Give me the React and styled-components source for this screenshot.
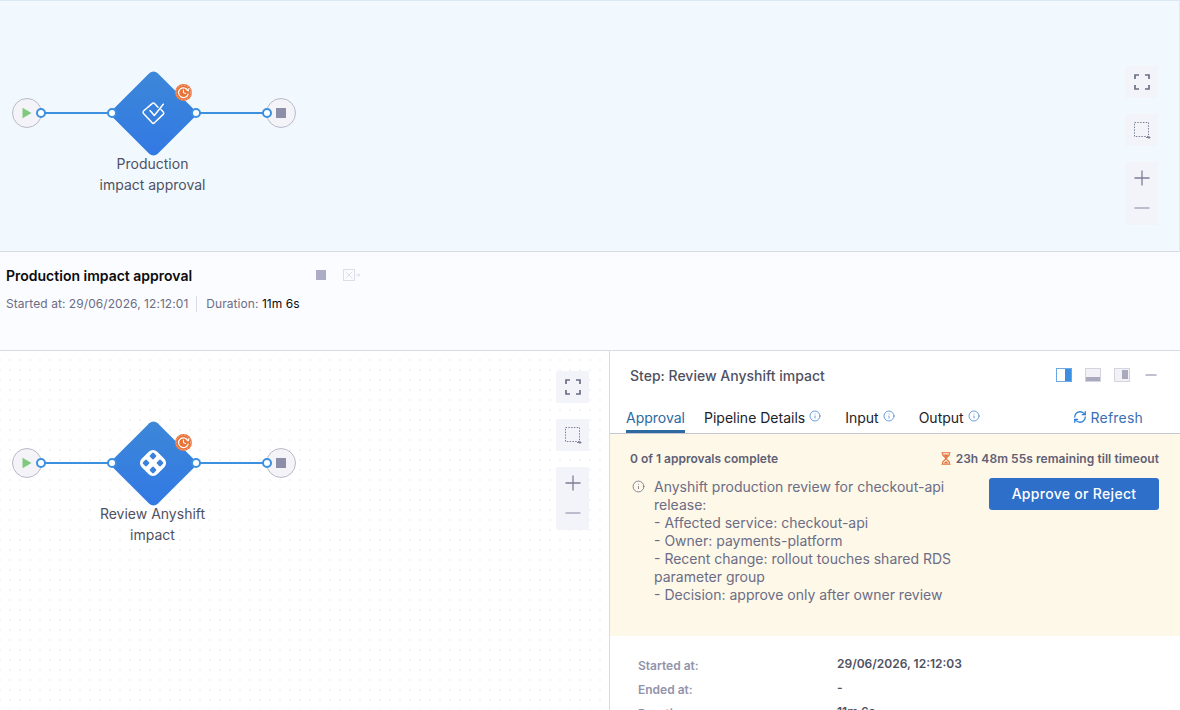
import React from 'react';
import styled, { createGlobalStyle } from 'styled-components';
import { Info, RefreshCw } from 'lucide-react';

const GlobalStyle = createGlobalStyle`
  html, body {
    margin: 0;
    padding: 0;
    height: 710px;
    overflow: hidden;
    background: #fff;
    font-family: Inter, "Liberation Sans", sans-serif;
    -webkit-font-smoothing: antialiased;
  }
`;

const Start = () => (
  <StartCircle>
    <svg width="10" height="12" viewBox="0 0 10 12"><path d="M0.5 0.8 L9.5 6 L0.5 11.2 Z" fill="#7fc97f" /></svg>
  </StartCircle>
);

const Stop = () => (
  <StopCircle>
    <StopSquare />
  </StopCircle>
);

const ApprovalGlyph = () => (
  <svg width="26" height="26" viewBox="0 0 26 26" fill="none" stroke="#fff" strokeWidth="1.5" strokeLinejoin="round" strokeLinecap="round">
    <path d="M18 7.2 L14.5 3.6 Q13.3 2.4 12.1 3.6 L3.5 11 Q2.5 12.2 3.5 13.4 L12.2 22.8 Q13.3 24 14.4 22.8 L23.2 14.4 Q24.4 13.2 23.3 12 L21 9.6" />
    <path d="M10 10.5 L14.3 15.5 L23.3 4.2" />
  </svg>
);

const AnyshiftGlyph = () => (
  <svg width="32" height="32" viewBox="0 0 32 32">
    <rect x="5" y="5" width="22" height="22" rx="6" fill="#fff" transform="rotate(45 16 16)" />
    <g fill="#3a82dc">
      <rect x="13.3" y="6.3" width="5.4" height="5.4" rx="1.2" transform="rotate(45 16 9)" />
      <rect x="13.3" y="20.3" width="5.4" height="5.4" rx="1.2" transform="rotate(45 16 23)" />
      <rect x="6.3" y="13.3" width="5.4" height="5.4" rx="1.2" transform="rotate(45 9 16)" />
      <rect x="20.3" y="13.3" width="5.4" height="5.4" rx="1.2" transform="rotate(45 23 16)" />
    </g>
  </svg>
);

const WaitingBadge = () => (
  <Badge>
    <svg width="17" height="17" viewBox="0 0 16 16" fill="none" stroke="#fff" strokeLinecap="round">
      <circle cx="8" cy="8" r="8" fill="#e9743a" stroke="none" />
      <path d="M12.2 6.4 A4.6 4.6 0 1 0 12.4 9.4" strokeWidth="1.1" />
      <path d="M8 5.6 V8.2 L10 9" strokeWidth="1" />
      <path d="M10.4 5.2 L12.6 6.6 L13 4.2" strokeWidth="0.9" />
      <circle cx="8" cy="8" r="6.9" strokeWidth="0.6" strokeDasharray="1 2" opacity="0.6" />
    </svg>
  </Badge>
);

const PipelineGraph = ({ glyph, label }) => (
  <Graph>
    <Edge $from={41} $to={112} />
    <Edge $from={196} $to={267} />
    <Start />
    <Stop />
    <Diamond />
    <GlyphSlot>{glyph}</GlyphSlot>
    <WaitingBadge />
    <Port $x={41} />
    <Port $x={112} />
    <Port $x={196} />
    <Port $x={267} />
    <NodeLabel>{label}</NodeLabel>
  </Graph>
);

const CanvasControls = () => (
  <Controls>
    <ControlBox>
      <svg width="16" height="16" viewBox="0 0 16 16" fill="none" stroke="#6b6d85" strokeWidth="1.7">
        <path d="M1 5 V1 H5 M11 1 H15 V5 M15 11 V15 H11 M5 15 H1 V11" />
      </svg>
    </ControlBox>
    <ControlBox>
      <svg width="18" height="18" viewBox="0 0 18 18" fill="none" stroke="#7d7f96" strokeWidth="1" strokeDasharray="1.5 1.3">
        <rect x="1.5" y="1.5" width="14" height="14" />
        <path d="M13 16.5 H17 M15.5 15 L17 16.5 L15.5 18" strokeDasharray="none" />
      </svg>
    </ControlBox>
    <ZoomBox>
      <svg width="16" height="16" viewBox="0 0 16 16" stroke="#7d7f96" strokeWidth="1.3"><path d="M0.5 8 H15.5 M8 0.5 V15.5" /></svg>
      <svg width="16" height="16" viewBox="0 0 16 16" stroke="#9d9fb3" strokeWidth="1.3"><path d="M0.5 8 H15.5" /></svg>
    </ZoomBox>
  </Controls>
);

const LayoutRight = () => (
  <svg width="16" height="14" viewBox="0 0 16 14">
    <rect x="0.5" y="0.5" width="15" height="13" fill="#fff" stroke="#6aa9e6" />
    <rect x="9" y="1" width="6" height="12" fill="#3c8fe0" />
  </svg>
);

const LayoutBottom = () => (
  <svg width="16" height="14" viewBox="0 0 16 14">
    <rect x="0.5" y="0.5" width="15" height="13" fill="#f1f1f6" stroke="#d3d4df" />
    <rect x="1" y="9" width="14" height="4" fill="#a9aabd" />
  </svg>
);

const LayoutFloat = () => (
  <svg width="16" height="14" viewBox="0 0 16 14">
    <rect x="0.5" y="0.5" width="15" height="13" fill="#f1f1f6" stroke="#d3d4df" />
    <rect x="8" y="2" width="6" height="9" fill="#a9aabd" />
  </svg>
);

const Hourglass = () => (
  <svg width="10" height="13" viewBox="0 0 10 13" fill="none" stroke="#e2703a" strokeWidth="1.1">
    <path d="M0.5 0.7 H9.5 M0.5 12.3 H9.5" />
    <path d="M1.7 1 V3 L5 6.5 L8.3 3 V1" />
    <path d="M1.7 12 V10 L5 6.5 L8.3 10 V12" />
    <path d="M2.4 2.4 H7.6 L5 5.6 Z M2.4 11.6 L5 9 L7.6 11.6 Z" fill="#e2703a" stroke="none" />
  </svg>
);

const App = () => {
  return (
    <Page>
      <GlobalStyle />
      <StageCanvas>
        <PipelineGraph glyph={<ApprovalGlyph />} label={<>Production<br />impact approval</>} />
        <CanvasControls />
      </StageCanvas>

      <StageHeader>
        <TitleRow>
          <StageTitle>Production impact approval</StageTitle>
          <HeaderStop />
          <svg width="18" height="12" viewBox="0 0 18 12" fill="none" stroke="#dcdde8" strokeWidth="1">
            <rect x="0.5" y="0.5" width="11" height="11" />
            <path d="M2.5 2.5 L9.5 9.5 M9.5 2.5 L2.5 9.5 M13 6 H17 M15.5 4.5 L17 6 L15.5 7.5" />
          </svg>
        </TitleRow>
        <MetaRow>
          <span>Started at: 29/06/2026, 12:12:01</span>
          <MetaDivider />
          <span>Duration: <MetaStrong>11m 6s</MetaStrong></span>
        </MetaRow>
      </StageHeader>

      <Lower>
        <StepCanvas>
          <PipelineGraph glyph={<AnyshiftGlyph />} label={<>Review Anyshift<br />impact</>} />
          <CanvasControls />
        </StepCanvas>

        <Details>
          <DetailsHead>
            <StepTitle>Step: Review Anyshift impact</StepTitle>
            <LayoutIcons>
              <LayoutRight />
              <LayoutBottom />
              <LayoutFloat />
              <MinimizeIcon width="12" height="14" viewBox="0 0 12 14" stroke="#9d9fb3" strokeWidth="1.3"><path d="M0.5 7 H11.5" /></MinimizeIcon>
            </LayoutIcons>
          </DetailsHead>

          <Tabs>
            <Tab $active>Approval</Tab>
            <Tab>Pipeline Details <Info size={12} color="#3b7fd1" strokeWidth={1.5} /></Tab>
            <Tab>Input <Info size={12} color="#3b7fd1" strokeWidth={1.5} /></Tab>
            <Tab>Output <Info size={12} color="#3b7fd1" strokeWidth={1.5} /></Tab>
            <RefreshLink><RefreshCw size={14} strokeWidth={2.2} />Refresh</RefreshLink>
          </Tabs>

          <ApprovalBox>
            <ApprovalTop>
              <span>0 of 1 approvals complete</span>
              <Timer><Hourglass />23h 48m 55s remaining till timeout</Timer>
            </ApprovalTop>
            <ApprovalBody>
              <InfoSlot><Info size={13} color="#6b6d85" strokeWidth={1.5} /></InfoSlot>
              <Message>
                Anyshift production review for checkout-api release:{'\n'}
                - Affected service: checkout-api{'\n'}
                - Owner: payments-platform{'\n'}
                - Recent change: rollout touches shared RDS parameter group{'\n'}
                - Decision: approve only after owner review
              </Message>
              <ApproveButton>Approve or Reject</ApproveButton>
            </ApprovalBody>
          </ApprovalBox>

          <InfoGrid>
            <InfoLabel>Started at:</InfoLabel>
            <InfoValue>29/06/2026, 12:12:03</InfoValue>
            <InfoLabel>Ended at:</InfoLabel>
            <InfoValue>-</InfoValue>
            <InfoLabel>Duration:</InfoLabel>
            <InfoValue>11m 6s</InfoValue>
          </InfoGrid>
        </Details>
      </Lower>
    </Page>
  );
};

export default App;

// Styled Components
const Page = styled.div`
  width: 1180px;
  height: 710px;
  overflow: hidden;
  display: flex;
  flex-direction: column;
`;

const StageCanvas = styled.div`
  height: 250px;
  flex: none;
  display: flex;
  justify-content: space-between;
  align-items: flex-start;
  padding-right: 21px;
  background: #f1f9ff;
  border-top: 1px solid #d9e8f2;
  border-right: 1px solid #dfeaf2;
  border-bottom: 1px solid #d9dae5;
`;

const StageHeader = styled.div`
  height: 99px;
  flex: none;
  box-sizing: border-box;
  padding: 15px 6px 0;
  background: #fbfcff;
  border-bottom: 1px solid #d9dae5;
`;

const TitleRow = styled.div`
  display: flex;
  align-items: center;
  height: 16px;
  svg { margin-left: 17px; }
`;

const StageTitle = styled.div`
  width: 310px;
  font-size: 14px;
  font-weight: 600;
  color: #0b0b0d;
`;

const HeaderStop = styled.div`
  width: 10px;
  height: 10px;
  background: #acadc4;
`;

const MetaRow = styled.div`
  display: flex;
  align-items: center;
  margin-top: 13px;
  font-size: 12px;
  line-height: 16px;
  letter-spacing: 0.06px;
  color: #6b6d85;
`;

const MetaDivider = styled.div`
  width: 1px;
  height: 16px;
  margin: 0 9px 0 8px;
  background: #d9dae5;
`;

const MetaStrong = styled.span`
  color: #0b0b0d;
`;

const Lower = styled.div`
  flex: 1;
  min-height: 0;
  display: flex;
`;

const StepCanvas = styled.div`
  width: 609px;
  flex: none;
  display: flex;
  justify-content: space-between;
  align-items: flex-start;
  padding-right: 20px;
  box-sizing: border-box;
  background-color: #fff;
  background-image: radial-gradient(#f4f4f8 1px, transparent 1.2px);
  background-size: 10px 10px;
  background-position: 5px 4px;
`;

const Graph = styled.div`
  position: relative;
  width: 310px;
  height: 130px;
  flex: none;
  margin-top: 70px;
`;

const Edge = styled.div`
  position: absolute;
  left: ${(p) => p.$from}px;
  width: ${(p) => p.$to - p.$from}px;
  top: 41px;
  height: 2px;
  background: #3d8fe0;
`;

const Circle = styled.div`
  position: absolute;
  top: 27px;
  width: 30px;
  height: 30px;
  box-sizing: border-box;
  display: flex;
  align-items: center;
  justify-content: center;
  border-radius: 50%;
  border: 1px solid #b9bac9;
  background: #f3f3f8;
`;

const StartCircle = styled(Circle)`
  left: 12px;
`;

const StopCircle = styled(Circle)`
  left: 266px;
`;

const StopSquare = styled.div`
  width: 10px;
  height: 10px;
  background: #8d8ea8;
`;

const Diamond = styled.div`
  position: absolute;
  left: 121.5px;
  top: 10.5px;
  width: 63px;
  height: 63px;
  border-radius: 6px;
  transform: rotate(45deg);
  background: linear-gradient(135deg, #3c88d8 0%, #3278e4 100%);
`;

const GlyphSlot = styled.div`
  position: absolute;
  left: 123px;
  top: 12px;
  width: 60px;
  height: 60px;
  display: flex;
  align-items: center;
  justify-content: center;
`;

const Badge = styled.div`
  position: absolute;
  left: 175px;
  top: 13px;
  width: 17px;
  height: 17px;
  line-height: 0;
`;

const Port = styled.div`
  position: absolute;
  left: ${(p) => p.$x - 5}px;
  top: 37px;
  width: 10px;
  height: 10px;
  box-sizing: border-box;
  border-radius: 50%;
  border: 2px solid #3d8fe0;
  background: #fff;
`;

const NodeLabel = styled.div`
  position: absolute;
  left: 72.5px;
  top: 82px;
  width: 160px;
  text-align: center;
  font-size: 14px;
  line-height: 21px;
  color: #4f5162;
`;

const Controls = styled.div`
  width: 33px;
  flex: none;
  display: flex;
  flex-direction: column;
  gap: 16px;
  margin-top: 20px;
  ${StageCanvas} & {
    margin-top: 65px;
  }
`;

const ControlBox = styled.div`
  height: 32px;
  display: flex;
  align-items: center;
  justify-content: center;
  border-radius: 2px;
  background: #f3f3fa;
`;

const ZoomBox = styled.div`
  height: 63px;
  display: flex;
  flex-direction: column;
  align-items: center;
  justify-content: space-between;
  padding: 8px 0 9px;
  box-sizing: border-box;
  border-radius: 2px;
  background: #f3f3fa;
`;

const Details = styled.div`
  flex: 1;
  min-width: 0;
  border-left: 1px solid #d9dae5;
  background: #fff;
`;

const DetailsHead = styled.div`
  height: 48px;
  display: flex;
  align-items: center;
  justify-content: space-between;
  padding: 0 23px 0 20px;
`;

const StepTitle = styled.div`
  font-size: 14px;
  font-weight: 500;
  color: #4f5162;
`;

const LayoutIcons = styled.div`
  display: flex;
  align-items: center;
  gap: 13px;
`;

const MinimizeIcon = styled.svg`
  margin-left: 2px;
`;

const Tabs = styled.div`
  height: 35px;
  display: flex;
  align-items: flex-start;
  gap: 24px;
  padding: 10px 37px 0 16px;
  box-sizing: border-box;
  border-bottom: 1px solid #c5c6d3;
`;

const Tab = styled.div`
  height: 24px;
  box-sizing: border-box;
  display: flex;
  align-items: flex-start;
  gap: 4px;
  font-size: 14px;
  line-height: 18px;
  color: ${(p) => (p.$active ? '#2d6a9f' : '#22222a')};
  border-bottom: 3px solid ${(p) => (p.$active ? '#2d6a9f' : 'transparent')};
  margin-right: ${(p) => (p.$active ? '-5px' : '0')};
  svg { margin-top: 1px; }
`;

const RefreshLink = styled.div`
  margin-left: auto;
  display: flex;
  align-items: center;
  gap: 4px;
  height: 16px;
  font-size: 14px;
  letter-spacing: 0.2px;
  color: #3a6fb5;
  svg { color: #2f7fd6; }
`;

const ApprovalBox = styled.div`
  height: 202px;
  box-sizing: border-box;
  padding: 16px 21px 0 20px;
  background: #fef8e9;
`;

const ApprovalTop = styled.div`
  display: flex;
  justify-content: space-between;
  align-items: center;
  height: 16px;
  font-size: 12px;
  font-weight: 600;
  color: #5f6074;
`;

const Timer = styled.div`
  display: flex;
  align-items: center;
  gap: 5px;
  letter-spacing: 0.06px;
`;

const ApprovalBody = styled.div`
  display: flex;
  align-items: flex-start;
  margin-top: 12px;
`;

const InfoSlot = styled.div`
  width: 24px;
  flex: none;
  padding: 2px 0 0 2px;
  box-sizing: border-box;
  line-height: 0;
`;

const Message = styled.div`
  width: 315px;
  flex: none;
  white-space: pre-line;
  font-size: 14px;
  line-height: 18px;
  color: #6b6d85;
`;

const ApproveButton = styled.div`
  width: 170px;
  height: 32px;
  margin-left: auto;
  padding-bottom: 2px;
  box-sizing: border-box;
  display: flex;
  align-items: center;
  justify-content: center;
  border-radius: 3px;
  background: #2d6fc9;
  color: #fff;
  font-size: 14px;
  font-weight: 500;
  letter-spacing: 0.3px;
`;

const InfoGrid = styled.div`
  display: grid;
  grid-template-columns: 199px 1fr;
  grid-auto-rows: 24px;
  padding: 17px 28px 0;
  align-items: start;
`;

const InfoLabel = styled.div`
  margin-top: 5px;
  font-size: 12px;
  font-weight: 600;
  line-height: 16px;
  color: #9293ab;
`;

const InfoValue = styled.div`
  margin-top: 3px;
  font-size: 12px;
  font-weight: 600;
  line-height: 16px;
  color: #4f5162;
`;
